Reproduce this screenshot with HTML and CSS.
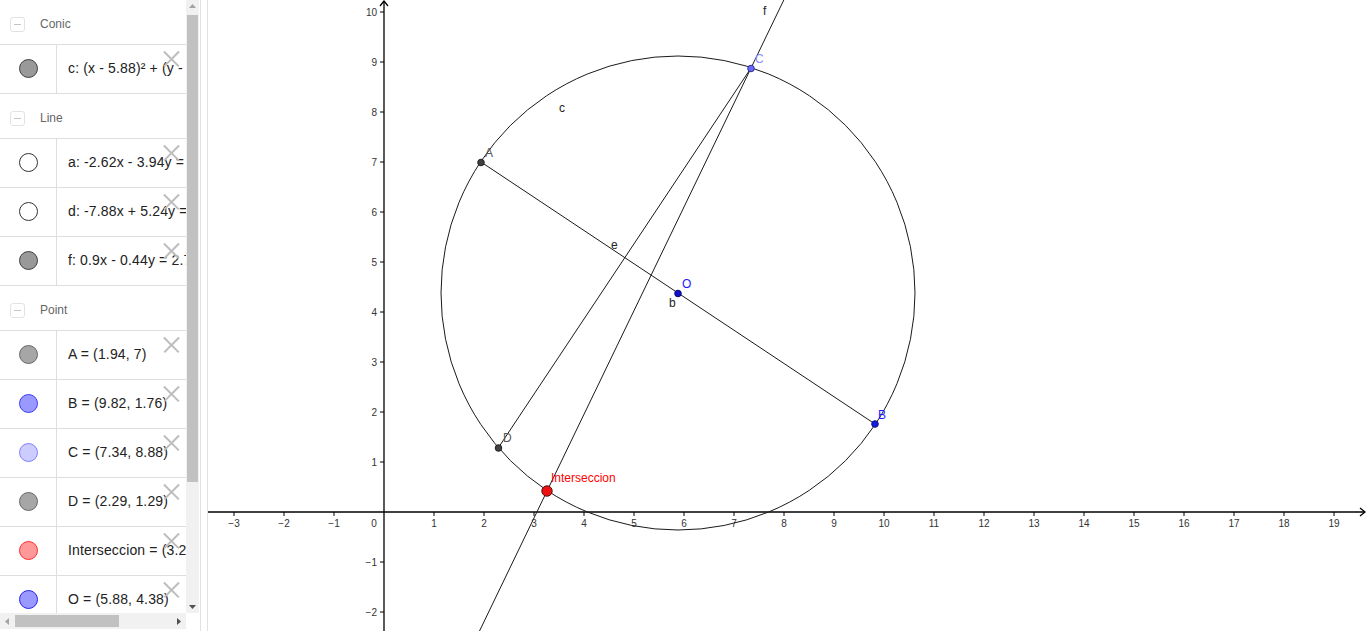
FILE: index.html
```html
<!DOCTYPE html>
<html>
<head>
<meta charset="utf-8">
<link rel="stylesheet" href="styles.css">
</head>
<body>
<div class="app">
  <div class="algebra">
    <div class="list">
      <div class="group"><span class="toggle"><span class="minus"></span></span><span class="gname">Conic</span></div>
      <div class="item"><div class="mark"><span class="dot gray"></span></div><div class="expr">c: (x - 5.88)² + (y - 4.38)² = 22.39</div><span class="del"></span></div>
      <div class="group"><span class="toggle"><span class="minus"></span></span><span class="gname">Line</span></div>
      <div class="item"><div class="mark"><span class="dot off"></span></div><div class="expr">a: -2.62x - 3.94y = -22.67</div><span class="del"></span></div>
      <div class="item"><div class="mark"><span class="dot off"></span></div><div class="expr">d: -7.88x + 5.24y = -11.29</div><span class="del"></span></div>
      <div class="item"><div class="mark"><span class="dot gray"></span></div><div class="expr">f: 0.9x - 0.44y = 2.75</div><span class="del"></span></div>
      <div class="group"><span class="toggle"><span class="minus"></span></span><span class="gname">Point</span></div>
      <div class="item"><div class="mark"><span class="dot ptgray"></span></div><div class="expr">A = (1.94, 7)</div><span class="del"></span></div>
      <div class="item"><div class="mark"><span class="dot blue"></span></div><div class="expr">B = (9.82, 1.76)</div><span class="del"></span></div>
      <div class="item"><div class="mark"><span class="dot lblue"></span></div><div class="expr">C = (7.34, 8.88)</div><span class="del"></span></div>
      <div class="item"><div class="mark"><span class="dot ptgray"></span></div><div class="expr">D = (2.29, 1.29)</div><span class="del"></span></div>
      <div class="item"><div class="mark"><span class="dot red"></span></div><div class="expr">Interseccion = (3.26, 0.42)</div><span class="del"></span></div>
      <div class="item"><div class="mark"><span class="dot blue2"></span></div><div class="expr">O = (5.88, 4.38)</div><span class="del"></span></div>
    </div>
    <div class="vscroll">
      <svg class="arr" width="13" height="12" viewBox="0 0 13 12"><path d="M3 8 L6.5 4 L10 8 Z" fill="#a3a3a3"/></svg>
      <div class="vtrack"><div class="vthumb"></div></div>
      <svg class="arr" width="13" height="12" viewBox="0 0 13 12"><path d="M3 4 L6.5 8 L10 4 Z" fill="#505050"/></svg>
    </div>
    <div class="hscroll">
      <svg class="arr" width="14" height="17" viewBox="0 0 14 17"><path d="M9 5 L5 8.5 L9 12 Z" fill="#a3a3a3"/></svg>
      <div class="htrack"><div class="hthumb"></div></div>
      <svg class="arr" width="14" height="17" viewBox="0 0 14 17"><path d="M5 5 L9 8.5 L5 12 Z" fill="#505050"/></svg>
    </div>
    <div class="corner"></div>
  </div>
  <div class="divider"></div>
  <div class="graphics">
    <svg class="plot" width="1158" height="631" viewBox="208 0 1158 631">
      <g class="ticks" stroke="#000" stroke-width="1">
        <path d="M234 512v4M284 512v4M334 512v4M434 512v4M484 512v4M534 512v4M584 512v4M634 512v4M684 512v4M734 512v4M784 512v4M834 512v4M884 512v4M934 512v4M984 512v4M1034 512v4M1084 512v4M1134 512v4M1184 512v4M1234 512v4M1284 512v4M1334 512v4"/>
        <path d="M380 12h4M380 62h4M380 112h4M380 162h4M380 212h4M380 262h4M380 312h4M380 362h4M380 412h4M380 462h4M380 562h4M380 612h4"/>
      </g>
      <g stroke="#000" stroke-width="1.3" fill="none">
        <path d="M208 512H1365"/>
        <path d="M384 631V1"/>
        <path d="M1360 508L1365 512L1360 516"/>
        <path d="M380 6L384 1L388 6"/>
      </g>
      <g class="xl" font-family="Liberation Sans, Arial, sans-serif" font-size="10" fill="#333" text-anchor="middle">
        <text x="234" y="527">−3</text><text x="284" y="527">−2</text><text x="334" y="527">−1</text>
        <text x="374" y="527">0</text>
        <text x="434" y="527">1</text><text x="484" y="527">2</text><text x="534" y="527">3</text><text x="584" y="527">4</text>
        <text x="634" y="527">5</text><text x="684" y="527">6</text><text x="734" y="527">7</text><text x="784" y="527">8</text>
        <text x="834" y="527">9</text><text x="884" y="527">10</text><text x="934" y="527">11</text><text x="984" y="527">12</text>
        <text x="1034" y="527">13</text><text x="1084" y="527">14</text><text x="1134" y="527">15</text><text x="1184" y="527">16</text>
        <text x="1234" y="527">17</text><text x="1284" y="527">18</text><text x="1334" y="527">19</text>
      </g>
      <g class="yl" font-family="Liberation Sans, Arial, sans-serif" font-size="10" fill="#333" text-anchor="end">
        <text x="377" y="16">10</text><text x="377" y="66">9</text><text x="377" y="116">8</text><text x="377" y="166">7</text>
        <text x="377" y="216">6</text><text x="377" y="266">5</text><text x="377" y="316">4</text><text x="377" y="366">3</text>
        <text x="377" y="416">2</text><text x="377" y="466">1</text><text x="377" y="566">−1</text><text x="377" y="616">−2</text>
      </g>
      <g stroke="#1a1a1a" stroke-width="1" fill="none">
        <circle cx="678" cy="293" r="237"/>
        <path d="M481 162L875 424"/>
        <path d="M498.5 447.5L751 68"/>
        <path d="M783.8 0L479.5 631"/>
      </g>
      <g font-family="Liberation Sans, Arial, sans-serif" font-size="12">
        <text x="559" y="112" fill="#222">c</text>
        <text x="611" y="249" fill="#222">e</text>
        <text x="669" y="307" fill="#222">b</text>
        <text x="763" y="15" fill="#222">f</text>
        <text x="485" y="157" fill="#555">A</text>
        <text x="755" y="63" fill="#8c8cff">C</text>
        <text x="682" y="288" fill="#1a1aff">O</text>
        <text x="878" y="419" fill="#1a1aff">B</text>
        <text x="503" y="442" fill="#555">D</text>
        <text x="551" y="482" fill="#ff0000">Interseccion</text>
      </g>
      <g stroke-width="1">
        <circle cx="481" cy="162.5" r="3.3" fill="#404040" stroke="#222"/>
        <circle cx="875" cy="424" r="3.3" fill="#1a1ae6" stroke="#101080"/>
        <circle cx="751" cy="68.5" r="3.3" fill="#6868ff" stroke="#303090"/>
        <circle cx="498.5" cy="448" r="3.3" fill="#404040" stroke="#222"/>
        <circle cx="678" cy="293.5" r="3.3" fill="#1010d0" stroke="#080870"/>
        <circle cx="547" cy="491" r="5.2" fill="#ee1111" stroke="#551111"/>
      </g>
    </svg>
  </div>
</div>
</body>
</html>
```

FILE: styles.css
```css
html, body {
  margin: 0;
  padding: 0;
  width: 1366px;
  height: 631px;
  overflow: hidden;
  background: #fff;
  font-family: "Liberation Sans", Arial, sans-serif;
}

.app {
  display: flex;
  width: 1366px;
  height: 631px;
}

.algebra {
  width: 200px;
  height: 631px;
  display: grid;
  grid-template-columns: 186px 13px 1px;
  grid-template-rows: 613px 18px;
  flex: none;
}

.list {
  grid-column: 1;
  grid-row: 1;
  overflow: hidden;
  background: #fff;
}

.group {
  height: 40px;
  padding-top: 4px;
  border-bottom: 1px solid #dedede;
  display: flex;
  align-items: center;
  position: relative;
}

.toggle {
  width: 13px;
  height: 13px;
  border: 1px solid #e2e2e2;
  border-radius: 3px;
  margin-left: 10px;
  margin-right: 15px;
  display: flex;
  align-items: center;
  justify-content: center;
  margin-top: 1px;
}

.minus {
  width: 7px;
  height: 1.5px;
  background: #c4c4c4;
}

.gname {
  font-size: 12px;
  color: #666;
}

.item {
  height: 48px;
  border-bottom: 1px solid #dedede;
  display: flex;
  position: relative;
}

.mark {
  width: 56px;
  flex: none;
  border-right: 1px solid #dedede;
  display: flex;
  align-items: center;
  justify-content: center;
  padding-bottom: 2px;
}

.dot {
  width: 17px;
  height: 17px;
  border-radius: 50%;
  border: 1px solid #444;
  box-sizing: content-box;
}

.dot.gray { background: #999; border-color: #404040; }
.dot.off { background: #fff; border-color: #333; }
.dot.ptgray { background: #a6a6a6; border-color: #666; }
.dot.blue { background: #9999ff; border-color: #3a3aff; }
.dot.lblue { background: #ccccff; border-color: #8080ff; }
.dot.red { background: #ff9999; border-color: #ff2a2a; }
.dot.blue2 { background: #9999ff; border-color: #2222ee; }

.expr {
  flex: 1;
  padding-left: 11px;
  padding-bottom: 2px;
  font-size: 14px;
  letter-spacing: 0.15px;
  color: #222;
  white-space: nowrap;
  overflow: hidden;
  display: flex;
  align-items: center;
}

.del {
  position: absolute;
  right: 7px;
  top: 6px;
  width: 16px;
  height: 16px;
}

.del::before,
.del::after {
  content: "";
  position: absolute;
  left: -2px;
  top: 7px;
  width: 21px;
  height: 1.6px;
  background: #bdbdbd;
  transform: rotate(45deg);
}

.del::after {
  transform: rotate(-45deg);
}

.vscroll {
  grid-column: 2;
  grid-row: 1;
  background: #f1f1f1;
  display: flex;
  flex-direction: column;
}

.arr {
  display: block;
  flex: none;
}

.vtrack {
  flex: 1;
  padding: 3px 1px 0 1px;
}

.vthumb {
  height: 467px;
  background: #c1c1c1;
}

.hscroll {
  grid-column: 1;
  grid-row: 2;
  background: #f1f1f1;
  display: flex;
  align-items: stretch;
  height: 16px;
}

.htrack {
  flex: 1;
  padding: 2px 0 2px 1px;
}

.hthumb {
  width: 104px;
  height: 100%;
  background: #c1c1c1;
}

.corner {
  grid-column: 2;
  grid-row: 2;
  background: #fff;
}

.divider {
  width: 6px;
  flex: none;
  border-left: 1px solid #e2e2e2;
  border-right: 1px solid #e2e2e2;
  background: #fff;
}

.graphics {
  flex: 1;
  overflow: hidden;
  position: relative;
}

.plot {
  display: block;
}
```
